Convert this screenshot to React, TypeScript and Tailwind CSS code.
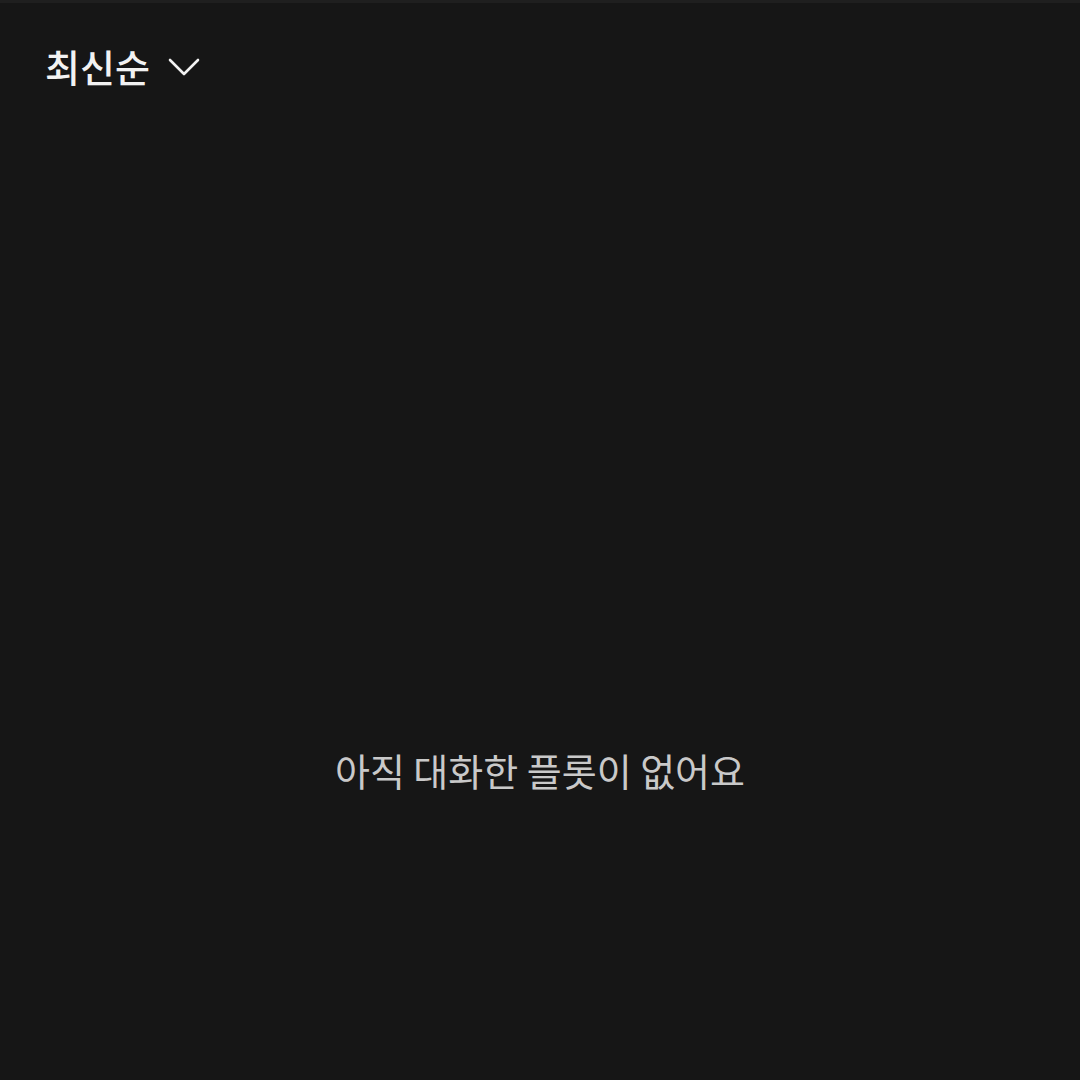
export default function App() {
    return (
        <div
            className="h-[1080px] w-full bg-[#161616] border-t-[3px] border-[#1f1f1f] flex flex-col"
            style={{ fontFamily: '"Noto Sans CJK KR", "Noto Sans", sans-serif' }}
        >
            <div className="flex items-center pl-[45px] pt-[38px] gap-[18px]">
                <span className="text-[38px] leading-[50px] font-medium text-[#f2f2f2]">최신순</span>
                <svg width="32" height="20" viewBox="0 0 32 20" fill="none" className="mt-[2px]">
                    <polyline
                        points="2,3 16,17 30,3"
                        stroke="#f2f2f2"
                        strokeWidth="2.6"
                        strokeLinecap="round"
                        strokeLinejoin="round"
                    />
                </svg>
            </div>
            <div className="flex-1 flex justify-center pt-[654px]">
                <span className="text-[38px] leading-[50px] text-[#c9c9c9]">아직 대화한 플롯이 없어요</span>
            </div>
        </div>
    );
}
